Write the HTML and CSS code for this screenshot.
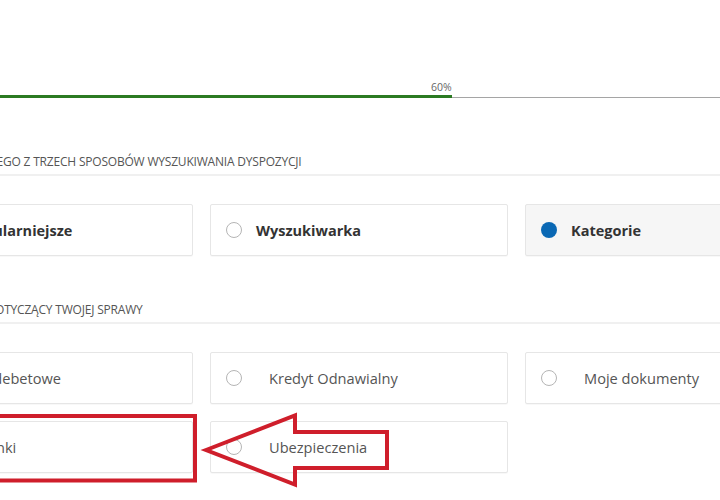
FILE: index.html
```html
<!DOCTYPE html>
<html lang="pl">
<head>
<meta charset="utf-8">
<title>Dyspozycje</title>
<link rel="stylesheet" href="styles.css">
</head>
<body>
<div class="page">
  <div class="progress">
    <div class="progress-label"><span>60%</span></div>
    <div class="progress-bar">
      <div class="progress-fill"></div>
      <div class="progress-rest"></div>
    </div>
  </div>

  <section class="section section-first">
    <h2 class="section-title">Skorzystaj z jednego z trzech sposobów wyszukiwania dyspozycji</h2>
    <div class="options options-bold">
      <div class="option"><span class="radio"></span><span class="label">Najpopularniejsze</span></div>
      <div class="option"><span class="radio"></span><span class="label">Wyszukiwarka</span></div>
      <div class="option selected"><span class="radio checked"></span><span class="label">Kategorie</span></div>
    </div>
  </section>

  <section class="section">
    <h2 class="section-title">Wybierz temat dotyczący twojej sprawy</h2>
    <div class="options options-regular">
      <div class="option"><span class="radio"></span><span class="label">Karty debetowe</span></div>
      <div class="option"><span class="radio"></span><span class="label">Kredyt Odnawialny</span></div>
      <div class="option"><span class="radio"></span><span class="label">Moje dokumenty</span></div>
      <div class="option"><span class="radio"></span><span class="label">Rachunki</span></div>
      <div class="option"><span class="radio"></span><span class="label">Ubezpieczenia</span></div>
    </div>
  </section>
</div>

<svg class="annotation" width="720" height="500" viewBox="0 0 720 500" aria-hidden="true">
  <rect x="-10" y="416" width="205" height="64.5" fill="none" stroke="#cf1e2b" stroke-width="4"/>
  <polygon points="206,450 295,415.5 295,432 387,432 387,468 295,468 295,484.5" fill="none" stroke="#cf1e2b" stroke-width="4" stroke-linejoin="miter"/>
</svg>
</body>
</html>
```
FILE: styles.css
```css
html, body {
  margin: 0;
  padding: 0;
  background: #ffffff;
  overflow: hidden;
}

body {
  font-family: "Open Sans", "Noto Sans", "Liberation Sans", sans-serif;
  color: #333;
  width: 720px;
  height: 500px;
  position: relative;
}

.page {
  margin-left: -105px;
  width: 928px;
  padding-top: 80px;
}

.progress-label {
  width: 60%;
  text-align: right;
  font-size: 10.5px;
  line-height: 14px;
  color: #666;
  height: 14px;
}

.progress-bar {
  display: flex;
  align-items: center;
  height: 3px;
  margin-top: 1px;
}

.progress-fill {
  width: 60%;
  height: 3px;
  background: #2b7a22;
}

.progress-rest {
  flex: 1;
  height: 1px;
  background: #a5a5a5;
  margin-top: 1px;
}

.section-first {
  margin-top: 57px;
}

.section + .section {
  margin-top: 47px;
}

.section-title {
  margin: 0;
  font-size: 12px;
  font-weight: 400;
  text-transform: uppercase;
  color: #555;
  line-height: 14px;
  padding-bottom: 5px;
  border-bottom: 2px solid #f0f0f0;
  letter-spacing: -0.2px;
}

.section-first .section-title {
  text-indent: -4px;
}

.options {
  display: grid;
  grid-template-columns: repeat(3, 298px);
  column-gap: 17px;
  row-gap: 17px;
  margin-top: 28px;
}

.option {
  height: 52px;
  box-sizing: border-box;
  border: 1px solid #e6e6e6;
  border-radius: 2px;
  background: #fff;
  display: flex;
  align-items: center;
  padding-left: 15px;
  box-shadow: 0 1px 1px rgba(0,0,0,0.03);
}

.option.selected {
  background: #f6f6f6;
}

.radio {
  width: 16px;
  height: 16px;
  box-sizing: border-box;
  border: 1px solid #b5b5b5;
  border-radius: 50%;
  background: #fff;
  flex: none;
}

.radio.checked {
  border: none;
  background: #0a68b4;
}

.options-bold .label {
  margin-left: 14px;
  font-size: 14.5px;
  font-weight: 700;
  color: #333;
}

.options-regular .label {
  margin-left: 27px;
  font-size: 14.6px;
  font-weight: 400;
  color: #555;
}

.annotation {
  position: absolute;
  left: 0;
  top: 0;
  pointer-events: none;
}
```
